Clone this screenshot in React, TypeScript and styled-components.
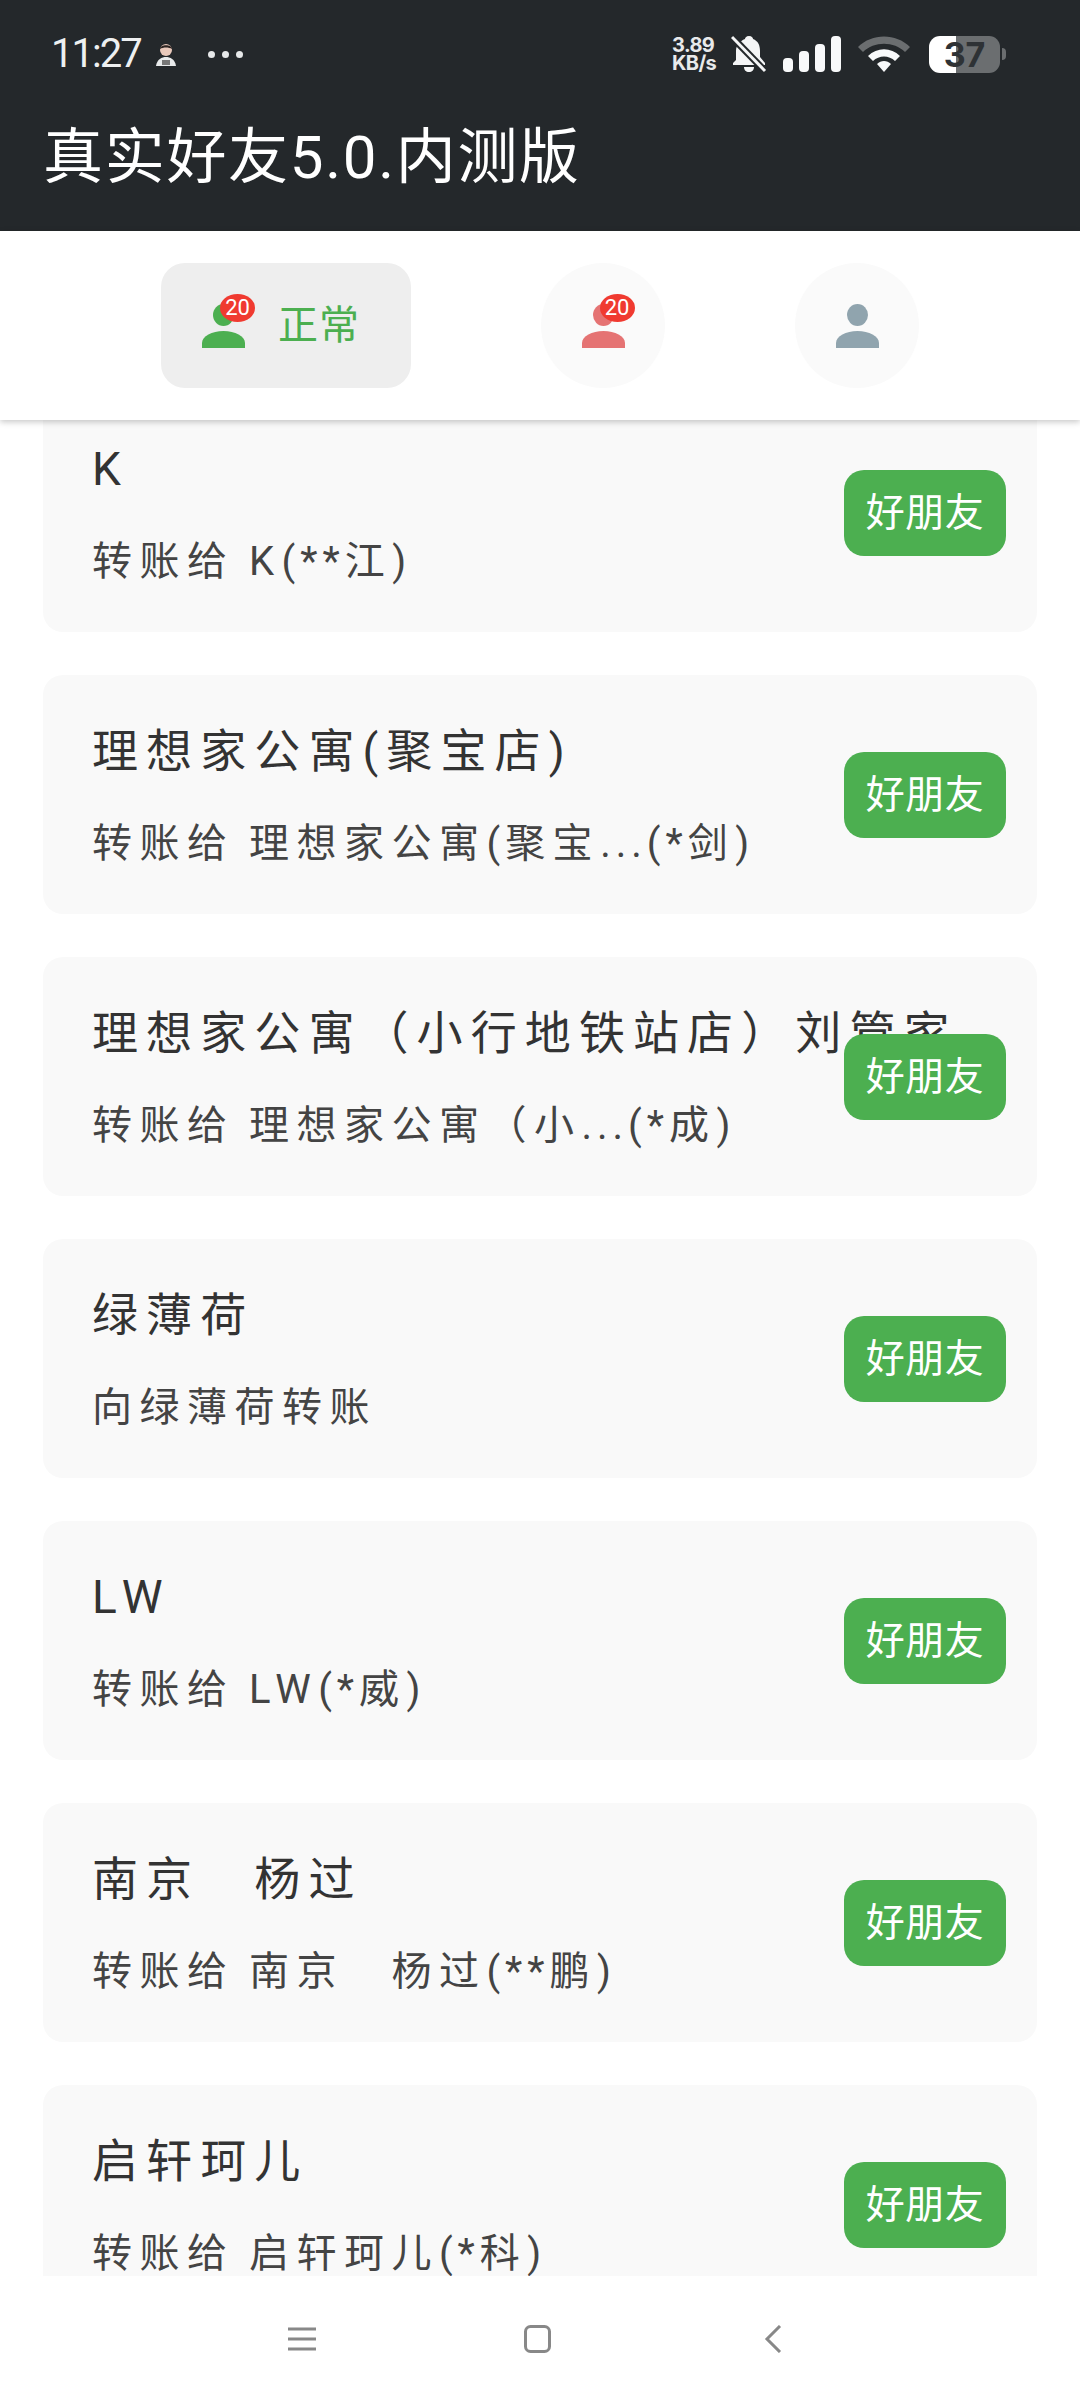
import React from "react";
import styled, { createGlobalStyle } from "styled-components";

const Global = createGlobalStyle`
  html, body { margin: 0; padding: 0; background: #fff; }
  #root { width: 1080px; height: 2400px; }
  * { box-sizing: border-box; }
`;
const FONT = `Roboto, "Noto Sans CJK SC", sans-serif`;

const Page = styled.div`
  width: 1080px; height: 2400px; display: flex; flex-direction: column;
  font-family: ${FONT}; background: #fff; overflow: hidden;
`;
const Header = styled.header`
  height: 231px; flex: none; background: #24282b; display: flex; flex-direction: column;
`;
const StatusBar = styled.div`
  height: 108px; display: flex; align-items: center; justify-content: space-between;
  padding: 0 74px 0 51px;
`;
const StatusLeft = styled.div`display: flex; align-items: center;`;
const Time = styled.span`font-size: 40px; font-weight: 400; color: #eef0f1; letter-spacing: -2px; line-height: 40px; margin-right: 13px;`;
const Dots = styled.div`display: flex; gap: 7px; margin-left: 30px;`;
const Dot = styled.i`width: 7px; height: 7px; border-radius: 50%; background: #e6e8e9; display: block;`;
const StatusRight = styled.div`display: flex; align-items: center;`;
const Speed = styled.div`
  font-size: 20px; font-weight: 700; line-height: 18px; color: #e8eaeb; width: 59px; font-family: Inter, sans-serif; letter-spacing: -.6px;
`;
const BellIcon = styled.svg`margin-right: 16px;`;
const WifiIcon = styled.svg`margin-left: 17px;`;
const Battery = styled.div`
  width: 71px; height: 37px; border-radius: 11px; margin-left: 19px; margin-right: 2px;
  background: linear-gradient(90deg, #fff 0 38%, #6b6e70 38%);
  display: flex; align-items: center; justify-content: center;
  font-size: 34px; font-weight: 700; color: #2e3235; font-family: Inter, sans-serif;
`;
const BatteryTip = styled.i`width: 4px; height: 12px; border-radius: 0 4px 4px 0; background: #6b6e70; display: block;`;
const AppTitle = styled.h1`
  margin: 0; padding: 4px 0 0 43px; font-size: 60px; font-weight: 400; color: #fff; line-height: 92px; letter-spacing: 1.7px;
`;

const TabBar = styled.nav`
  height: 189px; flex: none; background: #fff; display: flex; align-items: flex-start; justify-content: center;
  gap: 130px; padding-top: 32px; box-shadow: 0 2px 6px rgba(0,0,0,.22); position: relative; z-index: 2;
`;
const Tab = styled.div<{ $active?: boolean }>`
  height: 125px; width: ${p => (p.$active ? "250px" : "124px")};
  border-radius: ${p => (p.$active ? "24px" : "50%")};
  background: ${p => (p.$active ? "#eeeeee" : "#fafafa")};
  display: flex; align-items: center; justify-content: ${p => (p.$active ? "flex-start" : "center")};
  padding-left: ${p => (p.$active ? "41px" : "0")};
`;
const IconWrap = styled.div`position: relative; width: 43px; height: 44px; flex: none;`;
const Badge = styled.span`
  position: absolute; left: 18px; top: -10px; width: 35px; height: 28px; border-radius: 50%;
  background: #f03a30; color: #fff; font-size: 22px; line-height: 28px; text-align: center;
`;
const TabLabel = styled.span`font-size: 40px; color: #4caf50; margin-left: 33px; line-height: 48px; letter-spacing: 1px;`;

const List = styled.main`flex: 1; overflow: hidden; background: #fff;`;
const ListInner = styled.div`
  margin-top: -27px; padding: 0 43px; display: flex; flex-direction: column; gap: 43px;
`;
const Card = styled.article`
  position: relative; height: 239px; flex: none; background: #f9f9f9; border-radius: 20px;
  padding: 40px 0 0 49px; overflow: hidden;
`;
const Name = styled.div`font-size: 46px; line-height: 72px; color: #333; letter-spacing: 8.1px; white-space: nowrap;`;
const Sub = styled.div`font-size: 40px; line-height: 60px; margin-top: 27px; color: #444; letter-spacing: 7.5px; word-spacing: -3px; white-space: nowrap;`;
const Tight = styled.span`letter-spacing: 5px;`;
const FriendBtn = styled.button`
  position: absolute; right: 31px; top: 77px; width: 162px; height: 86px; border: 0; border-radius: 20px;
  background: #4caf50; color: #fff; font: 400 39px/86px ${FONT}; padding: 0; letter-spacing: 0.5px;
`;

const BottomNav = styled.footer`
  height: 124px; flex: none; background: #fff; display: flex; align-items: flex-start; padding: 49px 10px 0 0;
  justify-content: center;
`;
const MenuIcon = styled.svg`margin: 2px 208px 0 0;`;
const BackIcon = styled.svg`margin-left: 213px;`;

const Person = ({ color }: { color: string }) => (
  <svg width="43" height="44" viewBox="0 0 43 44">
    <ellipse cx="21.5" cy="11" rx="10.5" ry="11" fill={color} />
    <path d="M0 44V39C0 32 10 27 21.500 27S43 32 43 39V44Z" fill={color} />
  </svg>
);

const items: [string, string][] = [
  ["K", "转账给 K(**江)"],
  ["理想家公寓(聚宝店)", "转账给 理想家公寓(聚宝...(*剑)"],
  ["理想家公寓（小行地铁站店）刘管家", "转账给 理想家公寓（小...(*成)"],
  ["绿薄荷", "向绿薄荷转账"],
  ["LW", "转账给 LW(*威)"],
  ["南京　杨过", "转账给 南京　杨过(**鹏)"],
  ["启轩珂儿", "转账给 启轩珂儿(*科)"],
];

const subParts = (s: string) =>
  s.split(/([().*]+)/).map((part, i) => (i % 2 ? <Tight key={i}>{part}</Tight> : part));

export default function App() {
  return (
    <Page>
      <Global />
      <Header>
        <StatusBar>
          <StatusLeft>
            <Time>11:27</Time>
            <svg width="24" height="24" viewBox="0 0 24 24">
              <circle cx="12" cy="8" r="6" fill="#e9c9bb" />
              <path d="M6 7C6 2 18 2 18 7C15 5 9 5 6 7Z" fill="#2c2422" />
              <path d="M2 24C3 17 8 15 12 15S21 17 22 24Z" fill="#e8eaeb" />
              <rect x="8" y="18" width="8" height="5" fill="#777" />
            </svg>
            <Dots><Dot /><Dot /><Dot /></Dots>
          </StatusLeft>
          <StatusRight>
            <Speed>3.89<br />KB/s</Speed>
            <BellIcon width="36" height="38" viewBox="0 0 36 38">
              <path d="M18 1C21 1 22 3 22 4C27 6 29 10 29 16V22L34 28V30H2V28L5 25V16C5 10 9 6 14 4C14 3 15 1 18 1ZM13 32H23C23 35 21 37 18 37S13 35 13 32Z" fill="#f4f5f6" />
              <path d="M2 3L34 36" stroke="#24282b" strokeWidth="7" />
              <path d="M1 2L34 36" stroke="#f4f5f6" strokeWidth="3" />
            </BellIcon>
            <svg width="58" height="36" viewBox="0 0 58 36">
              <rect x="0" y="22" width="10" height="14" rx="4" fill="#f8f9fa" />
              <rect x="16" y="15" width="10" height="21" rx="4" fill="#f8f9fa" />
              <rect x="32" y="8" width="10" height="28" rx="4" fill="#f8f9fa" />
              <rect x="48" y="0" width="10" height="36" rx="4" fill="#f8f9fa" />
            </svg>
            <WifiIcon width="52" height="36" viewBox="0 0 52 36">
              <path d="M0 11C14 -3 38 -3 52 11L47 16C36 5 16 5 5 16Z" fill="#6b6e70" />
              <path d="M10 20C19 11 33 11 42 20L37 25C31 19 21 19 15 25Z" fill="#f8f9fa" />
              <path d="M19 28C23 24 29 24 33 28L26 36Z" fill="#f8f9fa" />
            </WifiIcon>
            <Battery>37</Battery>
            <BatteryTip />
          </StatusRight>
        </StatusBar>
        <AppTitle>真实好友5.0.内测版</AppTitle>
      </Header>
      <TabBar>
        <Tab $active>
          <IconWrap><Person color="#4caf50" /><Badge>20</Badge></IconWrap>
          <TabLabel>正常</TabLabel>
        </Tab>
        <Tab>
          <IconWrap><Person color="#e57373" /><Badge>20</Badge></IconWrap>
        </Tab>
        <Tab>
          <IconWrap><Person color="#90a4ae" /></IconWrap>
        </Tab>
      </TabBar>
      <List>
        <ListInner>
          {items.map(([n, s]) => (
            <Card key={n}>
              <Name>{n}</Name>
              <Sub>{subParts(s)}</Sub>
              <FriendBtn>好朋友</FriendBtn>
            </Card>
          ))}
        </ListInner>
      </List>
      <BottomNav>
        <MenuIcon width="28" height="24" viewBox="0 0 28 24">
          <path d="M0 2H28M0 12H28M0 22H28" stroke="#888" strokeWidth="3" />
        </MenuIcon>
        <svg width="27" height="28" viewBox="0 0 27 28">
          <rect x="1.500" y="1.500" width="24" height="25" rx="5" fill="none" stroke="#888" strokeWidth="3" />
        </svg>
        <BackIcon width="18" height="28" viewBox="0 0 18 28">
          <path d="M16 1L3 14L16 27" fill="none" stroke="#888" strokeWidth="3" />
        </BackIcon>
      </BottomNav>
    </Page>
  );
}
